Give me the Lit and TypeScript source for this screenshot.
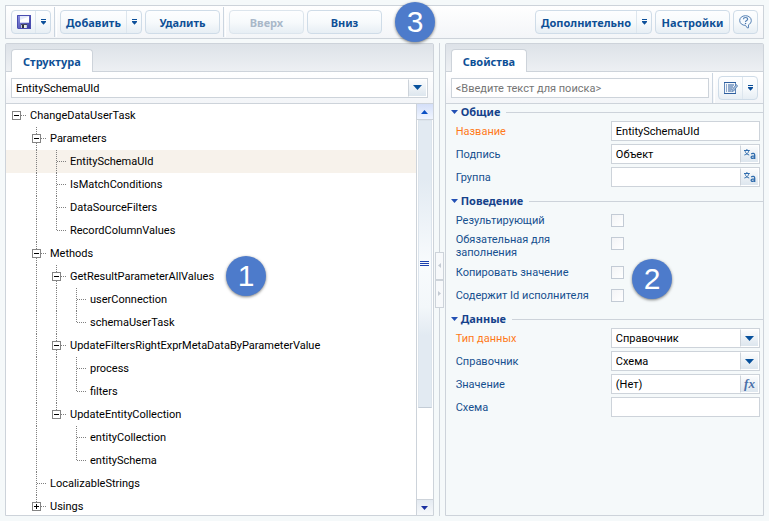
import { LitElement, html, svg, css, nothing } from "lit";
import { customElement, property, state } from "lit/decorators.js";
import { classMap } from "lit/directives/class-map.js";

interface TreeNode {
  name: string;
  children?: TreeNode[];
  collapsed?: boolean;
}

interface TreeRow {
  name: string;
  guides: ("line" | "blank")[];
  last: boolean;
  branch: boolean;
  collapsed: boolean;
}

const TREE: TreeNode = {
  name: "ChangeDataUserTask",
  children: [
    {
      name: "Parameters",
      children: [
        { name: "EntitySchemaUId" },
        { name: "IsMatchConditions" },
        { name: "DataSourceFilters" },
        { name: "RecordColumnValues" },
      ],
    },
    {
      name: "Methods",
      children: [
        {
          name: "GetResultParameterAllValues",
          children: [{ name: "userConnection" }, { name: "schemaUserTask" }],
        },
        {
          name: "UpdateFiltersRightExprMetaDataByParameterValue",
          children: [{ name: "process" }, { name: "filters" }],
        },
        {
          name: "UpdateEntityCollection",
          children: [{ name: "entityCollection" }, { name: "entitySchema" }],
        },
      ],
    },
    { name: "LocalizableStrings" },
    { name: "Usings", children: [], collapsed: true },
  ],
};

function flatten(node: TreeNode, guides: TreeRow["guides"] = [], last = true): TreeRow[] {
  const row: TreeRow = {
    name: node.name,
    guides,
    last,
    branch: !!node.children,
    collapsed: !!node.collapsed,
  };
  const kids = node.collapsed ? [] : node.children ?? [];
  const next: TreeRow["guides"] = [...guides, last ? "blank" : "line"];
  return [row, ...kids.flatMap((kid, i) => flatten(kid, next, i === kids.length - 1))];
}

const shared = css`
  * {
    box-sizing: border-box;
  }
  button,
  input,
  select {
    margin: 0;
    padding: 0;
    border: 0;
    border-radius: 0;
    background: none;
    font: inherit;
    color: inherit;
    outline: none;
  }
  svg {
    display: block;
  }
`;

const field = css`
  .field {
    display: flex;
    height: 20px;
    border: 1px solid #cdd3da;
    background: #fff;
    color: #000;
    position: relative;
  }
  .field input,
  .field select {
    flex: 1;
    min-width: 0;
    width: 100%;
    padding: 1px 4px 0;
    appearance: none;
  }
  .field input::placeholder {
    color: #757575;
    opacity: 1;
  }
  .cap {
    flex: none;
    width: 19px;
    border: 1px solid #fff;
    border-left: 1px solid #cdd3da;
    background: linear-gradient(#fbfcfd, #dde6ee);
    color: #2f63a5;
    display: flex;
    align-items: center;
    justify-content: center;
  }
  .drop .cap {
    position: absolute;
    top: 0;
    right: 0;
    bottom: 0;
    pointer-events: none;
  }
`;

const arrow = svg`<svg width="9" height="5" viewBox="0 0 9 5"><path d="M0 0h9L4.5 5z" fill="#06509c"/></svg>`;
const menuArrow = svg`<svg width="5" height="6" viewBox="0 0 5 6"><path d="M0 0h5v1H0zM0 2h5v1L2.500 5.700 0 3z" fill="#0c4f9a"/></svg>`;
const disk = svg`<svg width="14" height="14" viewBox="0 0 14 14">
  <defs><linearGradient id="d" x1="0" x2="1" y1="0" y2="1"><stop offset="0" stop-color="#8f95e6"/><stop offset="1" stop-color="#33359a"/></linearGradient></defs>
  <path d="M0 0h14v14H1L0 13z" fill="url(#d)"/><path d="M.5.5h13v13H1.200l-.7-.7z" fill="none" stroke="#4a4db0"/>
  <path d="M3 1h9v6.500H3z" fill="#e3e9fb"/><path d="M3 5l9-3.500v6H3z" fill="#fff"/>
  <path d="M4 9h6v4H4z" fill="#c9ccd8"/><path d="M4 9h6v1H4z" fill="#45485c"/><path d="M5 10h2v3H5z" fill="#30323f"/><path d="M7 10h2v3H7z" fill="#e6efe8"/></svg>`;
const help = svg`<svg width="13" height="14" viewBox="0 0 13 14" fill="none" stroke="#5580b4">
  <path d="M6.500.7C3 .7.700 2.900.700 5.500s2.300 4.900 5.800 4.900L8.200 12.800l1.200.1.100-3.100c1.700-.8 2.800-2.400 2.800-4.300C12.300 2.900 10 .7 6.500.7z" fill="#f6fafe" stroke-width="1"/>
  <path d="M4.400 4.300C4.500 3.100 5.400 2.500 6.500 2.500s2.100.7 2.100 1.700C8.600 5.600 6.500 5.500 6.500 7" stroke-width="1.200"/><path d="M5.900 7.900h1.300v1.200H5.900z" fill="#4572ac" stroke="none"/></svg>`;
const listEdit = svg`<svg width="14" height="12" viewBox="0 0 14 12">
  <path d="M.5.5h11v11H.5z" fill="#f3f7fb" stroke="#5f86b8"/><path d="M0 0h12v1H0zM0 11h12v1H0z" fill="#2e5f9f"/>
  <path d="M2 2.500h1v1H2zm2 0h6v1H4zM2 4.500h1v1H2zm2 0h5v1H4zM2 6.500h1v1H2zm2 0h4v1H4zM2 8.500h1v1H2zm2 0h3v1H4z" fill="#2e5f9f"/>
  <path d="M7.700 9.700l.5-2.100L12.200 2.600l1.500 1.200L9.700 9z" fill="#a9c0dc" stroke="#4672aa" stroke-width=".7"/></svg>`;
const translate = svg`<svg width="12" height="10" viewBox="0 0 12 10" fill="none" stroke="#2f6cad">
  <path d="M0 1.500h5.800M2.900 0v1.500M1.100 2.200c.6 2 2 3.300 4.100 3.800M4.700 2.200C4.100 4.200 2.500 5.500.4 6"/>
  <path d="M7.200 4.900c1.500-.9 3.500-.6 3.500 1v4M10.700 6.900c-1.900 0-3.600.1-3.600 1.400 0 1.500 2.900 1.400 3.600-.2" stroke-width="1.300"/></svg>`;

@customElement("tool-button")
class ToolButton extends LitElement {
  @property() label = "";
  @property({ type: Boolean }) menu = false;
  @property({ type: Boolean }) disabled = false;
  @property() hint = "";

  static styles = [
    shared,
    css`
      :host {
        display: flex;
      }
      .button {
        flex: 1;
        display: flex;
        align-items: center;
        height: 24px;
        border: 1px solid #cfdce8;
        border-radius: 4px;
        background: linear-gradient(#fdfeff, #f7fafc 50%, #e7eef4);
        color: #0d4f96;
        font-weight: bold;
        white-space: nowrap;
      }
      .face {
        flex: 1;
        display: flex;
        justify-content: center;
      }
      .more {
        flex: none;
        width: 15px;
        height: 22px;
        display: flex;
        align-items: center;
        justify-content: center;
        border-left: 1px solid #dde6ee;
      }
      .button:disabled {
        color: #a9b8c9;
        border-color: #dce5ed;
      }
    `,
  ];

  render() {
    return html`<button class="button" ?disabled=${this.disabled} aria-label=${this.hint || this.label}>
      <span class="face">${this.label || html`<slot></slot>`}</span>
      ${this.menu ? html`<span class="more">${menuArrow}</span>` : nothing}
    </button>`;
  }
}

@customElement("tree-view")
class TreeView extends LitElement {
  @state() private selected = "EntitySchemaUId";

  static styles = [
    shared,
    css`
      :host {
        display: block;
        overflow: hidden;
        background: #fff;
        color: #000;
      }
      .tree {
        margin: 0;
        padding: 0;
        list-style: none;
      }
      .row {
        display: flex;
        height: 23px;
        line-height: 24px;
        white-space: nowrap;
      }
      .selected {
        background: #f7f2eb;
      }
      .cell {
        flex: none;
        width: 20px;
        background-repeat: no-repeat;
        --v: repeating-linear-gradient(#808080 0 1px, transparent 1px 2px);
        --h: repeating-linear-gradient(90deg, transparent 0 1px, #808080 1px 2px);
      }
      .line {
        background-image: var(--v);
        background-size: 1px 100%;
        background-position: 10px 0;
      }
      .joint {
        width: 24px;
        display: flex;
        align-items: center;
        padding-left: 6px;
        background-image: var(--v), var(--h);
        background-size: 1px 100%, 11px 1px;
        background-position: 10px 0, 10px 11px;
      }
      .joint.last {
        background-size: 1px 12px, 11px 1px;
      }
      .joint.top {
        background-image: var(--h);
        background-size: 11px 1px;
        background-position: 10px 11px;
      }
      .toggle {
        width: 9px;
        height: 9px;
        border: 1px solid #848484;
        background: linear-gradient(#000, #000) center / 5px 1px no-repeat #fff;
      }
      .toggle.plus {
        background: linear-gradient(#000, #000) center / 5px 1px no-repeat,
          linear-gradient(#000, #000) center / 1px 5px no-repeat, #fff;
      }
    `,
  ];

  render() {
    return html`<ul class="tree" role="tree">
      ${flatten(TREE).map(
        (row) => html`<li
          class=${classMap({ row: true, selected: row.name === this.selected })}
          role="treeitem"
          @click=${() => (this.selected = row.name)}
        >
          ${row.guides.map((g) => html`<span class=${classMap({ cell: true, line: g === "line" })}></span>`)}
          <span class=${classMap({ cell: true, joint: true, last: row.last, top: !row.guides.length })}>
            ${row.branch
              ? html`<button
                  class=${classMap({ toggle: true, plus: row.collapsed })}
                  aria-label=${row.collapsed ? "+" : "−"}
                ></button>`
              : nothing}
          </span>
          <span>${row.name}</span>
        </li>`
      )}
    </ul>`;
  }
}

@customElement("property-group")
class PropertyGroup extends LitElement {
  @property() heading = "";

  static styles = [
    shared,
    css`
      :host {
        display: block;
        margin-bottom: 4px;
      }
      .head {
        display: flex;
        align-items: center;
        gap: 3px;
        height: 16px;
        margin: 0;
        padding-left: 5px;
        font: bold 11px/16px "Noto Sans", sans-serif;
        color: #15428b;
      }
      .mark {
        flex: none;
      }
      .rule {
        flex: 1;
        height: 1px;
        margin-left: 3px;
        background: #cdd3da;
      }
    `,
  ];

  render() {
    return html`<h2 class="head">
        <svg class="mark" width="7" height="4" viewBox="0 0 7 4"><path d="M0 0h7L3.500 4z" fill="#2350b4" /></svg>
        <span>${this.heading}</span><span class="rule"></span>
      </h2>
      <slot></slot>`;
  }
}

type Kind = "text" | "check" | "select" | "translate" | "formula";

@customElement("property-row")
class PropertyRow extends LitElement {
  @property() label = "";
  @property() value = "";
  @property() kind: Kind = "text";
  @property({ type: Boolean }) required = false;

  static styles = [
    shared,
    field,
    css`
      :host {
        display: grid;
        grid-template-columns: minmax(0, 155fr) minmax(0, 149fr);
        align-items: center;
        min-height: 23px;
        padding: 1px 3px 2px 10px;
      }
      .label {
        color: #15508f;
        line-height: 13px;
        padding-right: 12px;
      }
      .required {
        color: #ff7a1a;
      }
      .check {
        display: block;
        align-self: start;
        margin-top: 4px;
        appearance: none;
        width: 13px;
        height: 13px;
        border: 1px solid #c3cbd5;
        background: linear-gradient(135deg, #f3f4f6, #fff);
      }
      .fx {
        font: italic bold 13px "Liberation Serif", serif;
        color: #4a6fa8;
      }
    `,
  ];

  private control() {
    switch (this.kind) {
      case "check":
        return html`<input id="control" class="check" type="checkbox" />`;
      case "select":
        return html`<div class="field drop">
          <select id="control"><option>${this.value}</option></select><span class="cap">${arrow}</span>
        </div>`;
      case "translate":
        return html`<div class="field">
          <input id="control" .value=${this.value} /><button class="cap" aria-label="Перевод">${translate}</button>
        </div>`;
      case "formula":
        return html`<div class="field">
          <input id="control" .value=${this.value} /><button class="cap fx">fx</button>
        </div>`;
      default:
        return html`<div class="field"><input id="control" .value=${this.value} /></div>`;
    }
  }

  render() {
    return html`<label for="control" class=${classMap({ label: true, required: this.required })}>${this.label}</label>
      ${this.control()}`;
  }
}

@customElement("app-root")
class AppRoot extends LitElement {
  static styles = [
    shared,
    field,
    css`
      :host {
        display: flex;
        flex-direction: column;
        gap: 4px;
        box-sizing: border-box;
        height: 100vh;
        padding: 5px;
        position: relative;
        overflow: hidden;
        background: #f5f9fa;
        font: 11px Roboto, sans-serif;
      }
      .toolbar {
        flex: none;
        display: flex;
        align-items: center;
        gap: 3px;
        height: 34px;
        padding: 0 5px;
        border: 1px solid #cdd3da;
        background: linear-gradient(#fff, #f3f5f8);
        font-family: "Noto Sans", sans-serif;
      }
      .divider {
        flex: none;
        width: 3px;
        height: 30px;
        border-left: 1px solid #cbd5e0;
        border-right: 1px solid #fff;
      }
      .spacer {
        flex: 1;
      }
      .icon {
        width: 40px;
      }
      .help {
        width: 25px;
      }
      .add {
        width: 82px;
      }
      .plain {
        width: 75px;
      }
      .extra {
        width: 117px;
      }
      .main {
        flex: 1;
        min-height: 0;
        display: flex;
      }
      .panel {
        display: flex;
        flex-direction: column;
        min-width: 0;
        border: 1px solid #cdd3da;
        border-radius: 2px 2px 0 0;
      }
      .left {
        flex: 429;
      }
      .right {
        flex: 319;
      }
      .tabs {
        flex: none;
        display: flex;
        align-items: flex-end;
        height: 28px;
        padding-left: 5px;
        background: linear-gradient(#dde2e8, #edf0f3);
        border-bottom: 1px solid #cdd3da;
      }
      .tab {
        height: 23px;
        margin-bottom: -1px;
        padding: 0 11px;
        border: 1px solid #cdd3da;
        border-bottom: 0;
        border-radius: 4px 4px 0 0;
        background: #fff;
        color: #0d4f96;
        font-family: "Noto Sans", sans-serif;
        font-weight: bold;
      }
      .bar {
        flex: none;
        display: flex;
        align-items: center;
        gap: 3px;
        height: 32px;
        padding: 0 5px;
        background: linear-gradient(#fff, #f3f5f8);
        border-bottom: 1px solid #cdd3da;
      }
      .bar .field {
        flex: 1;
      }
      .body {
        flex: 1;
        min-height: 0;
        display: flex;
      }
      .tree {
        flex: 1;
      }
      .scroll {
        flex: none;
        width: 17px;
        display: flex;
        flex-direction: column;
        border-left: 1px solid #cdd3da;
        background: #fff;
      }
      .step {
        height: 16px;
        display: flex;
        align-items: center;
        justify-content: center;
        background: linear-gradient(#d4dff8, #f0f5ff);
        border-bottom: 1px solid #cdd3da;
      }
      .step.down {
        border-top: 1px solid #cdd3da;
        border-bottom: 0;
        background: linear-gradient(#e4eaf1, #f7f9fb);
      }
      .track {
        flex: 1;
        padding: 0 1px;
      }
      .thumb {
        display: flex;
        align-items: center;
        justify-content: center;
        height: 76%;
        border: 1px solid #dce4ec;
        border-bottom-color: #c3ccd6;
        background: linear-gradient(#e2eaf2 20%, #f8fbfd 50%, #f3f7fa 65%, #e2eaf2 75%);
      }
      .splitter {
        flex: none;
        width: 11px;
        display: flex;
        flex-direction: column;
        align-items: center;
        justify-content: center;
        background: linear-gradient(#cdd3da, #cdd3da) 5px 0 / 1px 100% no-repeat;
      }
      .grip {
        width: 9px;
        height: 28px;
        display: flex;
        align-items: center;
        justify-content: center;
        border: 1px solid #cdd3da;
        background: #f7f9fb;
      }
      .props {
        flex: 1;
        overflow: hidden;
      }
      .badge {
        position: absolute;
        width: 40px;
        height: 40px;
        border-radius: 50%;
        background: #4d7bcb;
        box-shadow: 0 1px 3px rgba(0, 0, 0, 0.5);
        color: #fff;
        font: 30px/40px "Liberation Sans", sans-serif;
        text-align: center;
      }
      .one {
        left: 226px;
        top: 256px;
      }
      .two {
        left: 632px;
        top: 259px;
      }
      .three {
        left: 395px;
        top: 2px;
      }
    `,
  ];

  render() {
    return html`
      <header class="toolbar" role="toolbar">
        <tool-button class="icon" menu hint="Сохранить">${disk}</tool-button>
        <span class="divider"></span>
        <tool-button class="add" menu label="Добавить"></tool-button>
        <tool-button class="plain" label="Удалить"></tool-button>
        <span class="divider"></span>
        <tool-button class="plain" disabled label="Вверх"></tool-button>
        <tool-button class="plain" label="Вниз"></tool-button>
        <span class="spacer"></span>
        <tool-button class="extra" menu label="Дополнительно"></tool-button>
        <tool-button class="plain" label="Настройки"></tool-button>
        <tool-button class="help" hint="Справка">${help}</tool-button>
      </header>
      <main class="main">
        <section class="panel left">
          <div class="tabs" role="tablist"><button class="tab" role="tab">Структура</button></div>
          <div class="bar">
            <div class="field drop">
              <select aria-label="Элемент"><option>EntitySchemaUId</option></select><span class="cap">${arrow}</span>
            </div>
          </div>
          <div class="body">
            <tree-view class="tree"></tree-view>
            <div class="scroll">
              <button class="step" aria-label="Прокрутить вверх">
                <svg width="7" height="4" viewBox="0 0 7 4"><path d="M0 4h7L3.500 0z" fill="#0a4fc4" /></svg>
              </button>
              <div class="track">
                <div class="thumb">
                  <svg width="9" height="6" viewBox="0 0 9 6"><path d="M0 0h9v1H0zM0 2h9v1H0zM0 4h9v1H0z" fill="#1a3fae" /></svg>
                </div>
              </div>
              <button class="step down" aria-label="Прокрутить вниз">
                <svg width="7" height="4" viewBox="0 0 7 4"><path d="M0 0h7L3.500 4z" fill="#1a2fa0" /></svg>
              </button>
            </div>
          </div>
        </section>
        <div class="splitter">
          <button class="grip" aria-label="Свернуть влево">
            <svg width="3" height="5" viewBox="0 0 3 5"><path d="M3 0v5L0 2.500z" fill="#c3cad3" /></svg>
          </button>
          <button class="grip" aria-label="Свернуть вправо">
            <svg width="3" height="5" viewBox="0 0 3 5"><path d="M0 0v5l3-2.500z" fill="#c3cad3" /></svg>
          </button>
        </div>
        <section class="panel right">
          <div class="tabs" role="tablist"><button class="tab" role="tab">Свойства</button></div>
          <div class="bar">
            <div class="field"><input type="search" aria-label="Поиск" placeholder="<Введите текст для поиска>" /></div>
            <span class="divider"></span>
            <tool-button class="icon" menu hint="Вид">${listEdit}</tool-button>
          </div>
          <div class="props">
            <property-group heading="Общие">
              <property-row required label="Название" value="EntitySchemaUId"></property-row>
              <property-row kind="translate" label="Подпись" value="Объект"></property-row>
              <property-row kind="translate" label="Группа"></property-row>
            </property-group>
            <property-group heading="Поведение">
              <property-row kind="check" label="Результирующий"></property-row>
              <property-row kind="check" label="Обязательная для заполнения"></property-row>
              <property-row kind="check" label="Копировать значение"></property-row>
              <property-row kind="check" label="Содержит Id исполнителя"></property-row>
            </property-group>
            <property-group heading="Данные">
              <property-row kind="select" required label="Тип данных" value="Справочник"></property-row>
              <property-row kind="select" label="Справочник" value="Схема"></property-row>
              <property-row kind="formula" label="Значение" value="(Нет)"></property-row>
              <property-row label="Схема"></property-row>
            </property-group>
          </div>
        </section>
      </main>
      <span class="badge one">1</span>
      <span class="badge two">2</span>
      <span class="badge three">3</span>
    `;
  }
}
